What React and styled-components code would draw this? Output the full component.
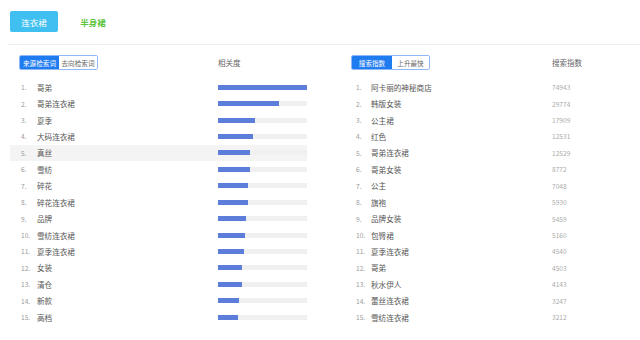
import React from "react";
import styled, { createGlobalStyle } from "styled-components";

const Global = createGlobalStyle`
  html, body { margin: 0; padding: 0; background: #fff; }
  body { font-family: "Noto Sans CJK SC", "Noto Sans", sans-serif; color: #333; }
  * { box-sizing: border-box; }
`;

const Page = styled.div`
  width: 640px;
  height: 340px;
  overflow: hidden;
  background: #fff;
`;

const TabBar = styled.div`
  display: flex;
  gap: 11px;
  padding: 11px 0 0 10px;
  height: 44px;
`;

const Tab = styled.div`
  width: 48px;
  height: 21px;
  border-radius: 2px;
  display: flex;
  align-items: center;
  justify-content: center;
  font-size: 8.5px;
  background: ${(p) => (p.$active ? "#40c0f0" : "transparent")};
  color: ${(p) => (p.$active ? "#fff" : "#5cc43a")};
  font-weight: ${(p) => (p.$active ? 400 : 700)};
`;

const Divider = styled.div`
  height: 1px;
  background: #efefef;
  margin-left: 8px;
`;

const Content = styled.div`
  display: grid;
  grid-template-columns: 297px 1fr;
  column-gap: 44px;
  padding: 10px 0 0 10px;
`;

const Panel = styled.div`
  display: flex;
  flex-direction: column;
`;

const HeaderRow = styled.div`
  display: grid;
  grid-template-columns: ${(p) => p.$cols};
  align-items: center;
  height: 15px;
  padding-left: ${(p) => p.$pad}px;
  margin-bottom: 9px;
`;

const Toggle = styled.div`
  display: flex;
  width: fit-content;
  border: 1px solid #8fb8f5;
  border-radius: 2px;
  overflow: hidden;
  height: 15px;
`;

const ToggleItem = styled.div`
  font-size: 6.6px;
  padding: 0 2px;
  display: flex;
  align-items: center;
  justify-content: center;
  width: ${(p) => p.$w}px;
  background: ${(p) => (p.$active ? "#1f7bf0" : "#fff")};
  color: ${(p) => (p.$active ? "#fff" : "#666")};
  white-space: nowrap;
`;

const ColTitle = styled.div`
  font-size: 7.5px;
  color: #666;
`;

const Row = styled.div`
  display: grid;
  grid-template-columns: ${(p) => p.$cols};
  align-items: center;
  height: 16.43px;
  padding-left: ${(p) => p.$pad}px;
  background: ${(p) => (p.$hl ? "#f4f4f4" : "transparent")};
`;

const Rank = styled.div`
  font-size: 6.6px;
  color: #999;
`;

const Word = styled.div`
  font-size: 7.6px;
  color: #555;
  white-space: nowrap;
`;

const Value = styled.div`
  font-size: 6.6px;
  color: #aaa;
`;

const BarTrack = styled.div`
  height: 5px;
  background: #f0f0f0;
`;

const BarFill = styled.div`
  height: 100%;
  background: #5d7ddb;
`;

const left = [
  ["哥弟", 100],
  ["哥弟连衣裙", 68],
  ["夏季", 41.6],
  ["大码连衣裙", 39.3],
  ["真丝", 36],
  ["雪纺", 35.5],
  ["碎花", 34],
  ["碎花连衣裙", 33.2],
  ["品牌", 31.5],
  ["雪纺连衣裙", 29.9],
  ["夏季连衣裙", 29.2],
  ["女装", 27.3],
  ["清仓", 27.3],
  ["新款", 23.6],
  ["高档", 22],
];

const right = [
  ["阿卡丽的神秘商店", "74943"],
  ["韩版女装", "29774"],
  ["公主裙", "17909"],
  ["红色", "12531"],
  ["哥弟连衣裙", "12529"],
  ["哥弟女装", "8772"],
  ["公主", "7048"],
  ["旗袍", "5930"],
  ["品牌女装", "5459"],
  ["包臀裙", "5160"],
  ["夏季连衣裙", "4540"],
  ["哥弟", "4503"],
  ["秋水伊人", "4143"],
  ["蕾丝连衣裙", "3247"],
  ["雪纺连衣裙", "3212"],
];

export default function App() {
  return (
    <Page>
      <Global />
      <TabBar>
        <Tab $active>连衣裙</Tab>
        <Tab>半身裙</Tab>
      </TabBar>
      <Divider />
      <Content>
        <Panel>
          <HeaderRow $cols="199px 1fr" $pad={9}>
            <Toggle>
              <ToggleItem $active $w={39}>来源检索词</ToggleItem>
              <ToggleItem $w={38}>去向检索词</ToggleItem>
            </Toggle>
            <ColTitle>相关度</ColTitle>
          </HeaderRow>
          {left.map(([w, pct], i) => (
            <Row key={w + i} $cols="16px 1fr 89px" $pad={11} $hl={i === 4}>
              <Rank>{i + 1}.</Rank>
              <Word>{w}</Word>
              <BarTrack>
                <BarFill style={{ width: `${pct}%` }} />
              </BarTrack>
            </Row>
          ))}
        </Panel>
        <Panel>
          <HeaderRow $cols="201px 1fr" $pad={0}>
            <Toggle>
              <ToggleItem $active $w={40}>搜索指数</ToggleItem>
              <ToggleItem $w={37}>上升最快</ToggleItem>
            </Toggle>
            <ColTitle>搜索指数</ColTitle>
          </HeaderRow>
          {right.map(([w, v], i) => (
            <Row key={w + i} $cols="15px 181px 1fr" $pad={5}>
              <Rank>{i + 1}.</Rank>
              <Word>{w}</Word>
              <Value>{v}</Value>
            </Row>
          ))}
        </Panel>
      </Content>
    </Page>
  );
}
